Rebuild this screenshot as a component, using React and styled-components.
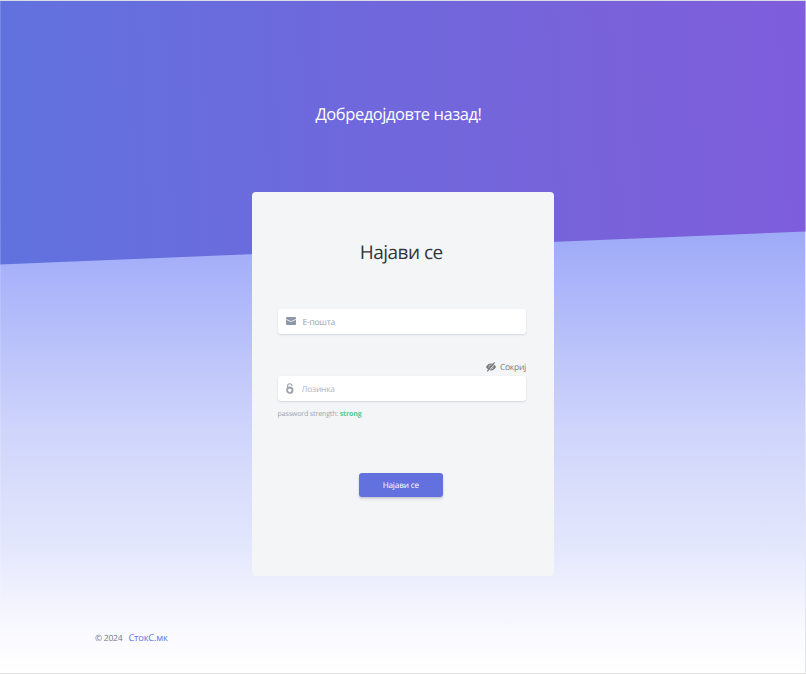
import React from "react";
import styled, { createGlobalStyle } from "styled-components";

const GlobalStyle = createGlobalStyle`
  * { box-sizing: border-box; }
  body {
    margin: 0;
    font-family: "Open Sans", "Noto Sans", sans-serif;
    text-rendering: geometricPrecision;
  }
`;

const Page = styled.div`
  display: flex;
  flex-direction: column;
  height: 674px;
  overflow: hidden;
  border-top: 1px solid #d9dbe6;
  border-bottom: 1.5px solid #e0e0e0;
  background: linear-gradient(180deg, #9daaf7 230px, #a9b3fa 275px, #cfd5fb 430px, #e1e5fc 535px, #f2f3fe 600px, #fafaff 635px, #fff 671px);
  box-shadow: inset 1px 0 rgba(255, 255, 255, 0.15), inset -1px 0 #e6e6f2;
`;

const Hero = styled.header`
  flex: none;
  height: 264px;
  padding: 98px 9px 0 0;
  text-align: center;
  background: linear-gradient(87deg, #6072de 0%, #6f68dc 45%, #7862da 75%, #7f5ddc 100%);
  box-shadow: inset 1px 0 rgba(255, 255, 255, 0.15), inset -1px 0 rgba(255, 255, 255, 0.4);
  clip-path: polygon(0 0, 100% 0, 100% 230.5px, 0 263.5px);
`;

const Welcome = styled.h1`
  margin: 0;
  font-size: 16.5px;
  letter-spacing: -0.44px;
  line-height: 29px;
  font-weight: 400;
  color: #fff;
`;

const Card = styled.main`
  flex: none;
  display: flex;
  flex-direction: column;
  width: 302px;
  height: 384px;
  margin: -73px 0 0 252px;
  padding: 45px 28px 0 25.5px;
  border-radius: 4px;
  background: #f3f5f7;
  position: relative;
`;

const Title = styled.h2`
  margin: 0 0 41px;
  padding-right: 1px;
  font-size: 19px;
  letter-spacing: -0.52px;
  line-height: 31px;
  font-weight: 400;
  text-align: center;
  color: #32353a;
`;

const Field = styled.label`
  display: flex;
  align-items: center;
  height: 25px;
  padding-left: 8px;
  gap: ${(p) => p.$gap};
  border-radius: 3px;
  background: #fff;
  box-shadow: 0 1px 2px rgba(50, 50, 93, 0.16);
`;

const Input = styled.input`
  flex: 1;
  min-width: 0;
  padding: 2px 0 0;
  border: 0;
  outline: 0;
  background: transparent;
  font: 400 8.5px/16px "Open Sans", "Noto Sans", sans-serif;
  letter-spacing: -0.25px;
  text-rendering: geometricPrecision;
  &::placeholder { color: ${(p) => p.$tone}; opacity: 1; }
`;

const Toggle = styled.button`
  display: flex;
  align-items: center;
  align-self: flex-end;
  gap: 4px;
  height: 16px;
  margin: 25px 0 1px;
  padding: 0;
  border: 0;
  background: none;
  font: 400 8.6px/16px "Open Sans", "Noto Sans", sans-serif;
  letter-spacing: -0.3px;
  text-rendering: geometricPrecision;
  color: #7d7f82;
`;

const Strength = styled.p`
  margin: 7px 0 0;
  font-size: 7.1px;
  letter-spacing: -0.17px;
  line-height: 13px;
  color: #98a2b3;
`;

const Level = styled.strong`
  font-weight: 700;
  color: #4fce94;
`;

const Submit = styled.button`
  align-self: center;
  width: 84px;
  height: 24px;
  margin: 52px 2px 0 0;
  padding: 1px 0 0;
  border: 0;
  border-radius: 3px;
  background: #6371de;
  box-shadow: 0 2px 3px rgba(50, 50, 93, 0.16), 0 1px 1px rgba(0, 0, 0, 0.08);
  font: 400 8.2px/23px "Open Sans", "Noto Sans", sans-serif;
  letter-spacing: -0.17px;
  text-rendering: geometricPrecision;
  color: #fff;
`;

const Footer = styled.footer`
  display: flex;
  align-items: center;
  gap: 6px;
  height: 22px;
  margin: 51px 0 0 95px;
  font-size: 8.5px;
  letter-spacing: -0.22px;
  color: #6d7488;
`;

const FooterLink = styled.a`
  padding-bottom: 1px;
  font-size: 9.4px;
  color: #6876df;
`;

const Icon = styled.svg`
  display: block;
  flex: none;
`;

function MailIcon() {
  return (
    <Icon width="10" height="9" viewBox="0 0 10 9" fill="#8c98aa">
      <path d="M1 0h8a1 1 0 0 1 1 1v1L5 4.2 0 2V1a1 1 0 0 1 1-1Z" />
      <path d="M0 2.7 5 5l5-2.3V7a1 1 0 0 1-1 1H1a1 1 0 0 1-1-1Z" />
    </Icon>
  );
}

function LockIcon() {
  return (
    <Icon width="8" height="12" viewBox="0 0 8 12" fill="none" stroke="#9da3ae">
      <path d="M1.6 5V2.9a2.2 2.2 0 0 1 4.4 0" strokeWidth="1.1" />
      <circle cx="3.8" cy="7.2" r="2.7" strokeWidth="1.9" />
    </Icon>
  );
}

function EyeOffIcon() {
  return (
    <Icon width="10" height="10" viewBox="0 0 10 10" fill="none">
      <path d="M0 5Q2 1.6 5 1.6T10 5Q8 8.4 5 8.4T0 5Z" fill="#74777a" />
      <circle cx="5" cy="5" r="2.1" stroke="#f3f5f7" strokeWidth=".6" />
      <path d="M2 9.7 9.4.7" stroke="#f3f5f7" strokeWidth=".9" />
      <path d="M1.2 9.3 8.6.4" stroke="#74777a" strokeWidth="1.1" />
    </Icon>
  );
}

export default function App() {
  return (
    <>
      <GlobalStyle />
      <Page>
        <Hero>
          <Welcome>Добредојдовте назад!</Welcome>
        </Hero>
        <Card>
          <Title>Најави се</Title>
          <Field $gap="7px">
            <MailIcon />
            <Input type="email" placeholder="Е-пошта" $tone="#98a2b1" />
          </Field>
          <Toggle type="button">
            <EyeOffIcon />
            Сокриј
          </Toggle>
          <Field $gap="8px">
            <LockIcon />
            <Input type="password" placeholder="Лозинка" $tone="#b0b7c2" />
          </Field>
          <Strength>
            password strength: <Level>strong</Level>
          </Strength>
          <Submit type="button">Најави се</Submit>
        </Card>
        <Footer>
          <span>© 2024</span>
          <FooterLink>СтокС.мк</FooterLink>
        </Footer>
      </Page>
    </>
  );
}
